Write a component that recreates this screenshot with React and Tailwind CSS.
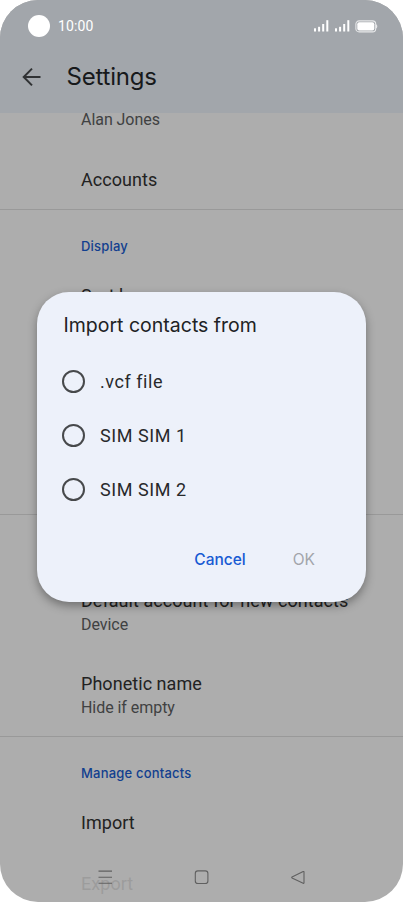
import React from "react";

const options = [".vcf file", "SIM SIM 1", "SIM SIM 2"];

const SignalIcon = () => (
  <svg width="15" height="12" viewBox="0 0 15 12" fill="white">
    <rect x="0" y="8.3" width="2" height="3.2" />
    <rect x="4.1" y="6.8" width="2" height="4.7" />
    <rect x="8.2" y="4" width="2" height="7.5" />
    <rect x="12.3" y="0.2" width="2" height="11.3" />
  </svg>
);

const BatteryIcon = () => (
  <svg width="23" height="13" viewBox="0 0 23 13" fill="none">
    <rect x="0.9" y="0.9" width="19.8" height="11" rx="3.2" stroke="white" strokeOpacity="0.75" strokeWidth="1.1" />
    <rect x="2.3" y="2.3" width="17" height="8.2" rx="2" fill="white" />
    <path d="M21.3 4.3C22.6 4.8 22.6 8 21.3 8.5Z" fill="white" />
  </svg>
);

const StatusBar = () => (
  <div className="flex h-[53px] items-center pr-[25px] pb-px pl-7 text-white">
    <div className="h-[22px] w-[22px] rounded-full bg-white" />
    <span className="ml-2 text-[14px] leading-5 tracking-[0.15px]">10:00</span>
    <div className="ml-auto flex items-center">
      <SignalIcon />
      <div className="ml-1.5">
        <SignalIcon />
      </div>
      <div className="ml-[5px]">
        <BatteryIcon />
      </div>
    </div>
  </div>
);

const Header = () => (
  <header className="h-[113px] bg-[#a2a6ab]">
    <StatusBar />
    <div className="flex h-12 items-center pl-[22px]">
      <svg width="20" height="20" viewBox="0 0 20 20" fill="none" stroke="#303234" strokeWidth="2">
        <path d="M18.5 10H2.3M10 1.6L1.7 10L10 18.4" />
      </svg>
      <h1 className="ml-[24.5px] font-['Inter',sans-serif] text-[24px] leading-8 font-normal tracking-[-0.2px] text-[#17191b]">
        Settings
      </h1>
    </div>
  </header>
);

const ItemTitle = ({ children }) => (
  <p className="text-[18px] leading-6 tracking-[0.05px] whitespace-nowrap text-[#222]">{children}</p>
);

const ItemDesc = ({ children }) => (
  <p className="text-[16px] leading-6 tracking-[-0.05px] whitespace-nowrap text-[#404142]">{children}</p>
);

const SectionTitle = ({ children }) => (
  <p className="font-['Inter',sans-serif] text-[13px] leading-6 font-medium tracking-[0.2px] text-[#123f8f]">
    {children}
  </p>
);

const SettingsList = () => (
  <main className="flex flex-col">
    <section className="h-[97px] border-b-[1.5px] border-[#999] pl-[81px]">
      <div className="-mt-[5px]">
        <ItemDesc>Alan Jones</ItemDesc>
      </div>
      <div className="mt-9">
        <ItemTitle>Accounts</ItemTitle>
      </div>
    </section>

    <section className="h-[305px] border-b-[1.5px] border-[#999] pt-6 pl-[81px]">
      <SectionTitle>Display</SectionTitle>
      <div className="mt-[26px]">
        <ItemTitle>Sort by</ItemTitle>
      </div>
    </section>

    <section className="h-[222px] border-b-[1.5px] border-[#999] pt-[74px] pl-[81px]">
      <ItemTitle>Default account for new contacts</ItemTitle>
      <ItemDesc>Device</ItemDesc>
      <div className="mt-[35px]">
        <ItemTitle>Phonetic name</ItemTitle>
        <ItemDesc>Hide if empty</ItemDesc>
      </div>
    </section>

    <section className="pt-6 pl-[81px]">
      <SectionTitle>Manage contacts</SectionTitle>
      <div className="mt-[26px]">
        <ItemTitle>Import</ItemTitle>
      </div>
      <div className="mt-[37px] opacity-12">
        <ItemTitle>Export</ItemTitle>
      </div>
    </section>
  </main>
);

const NavBar = () => (
  <nav className="absolute inset-x-0 bottom-0 flex h-[50px] items-center justify-between px-[97px] text-[#606060]">
    <svg width="16" height="16" viewBox="0 0 16 16" fill="none" stroke="currentColor" strokeWidth="1.1">
      <path d="M1.5 2.1H15M1.5 8.2H15M1.5 14.3H15" />
    </svg>
    <svg width="16" height="16" viewBox="0 0 16 16" fill="none" stroke="currentColor" strokeWidth="1.1">
      <rect x="1.3" y="1.9" width="12.6" height="12.6" rx="2.6" />
    </svg>
    <svg width="16" height="16" viewBox="0 0 16 16" fill="none" stroke="currentColor" strokeWidth="1.1" strokeLinejoin="round">
      <path d="M13.2 2.5L2 7.9Q1.4 8.4 2 8.9L13.2 14.3Q14 14.5 14 13.7V3.1Q14 2.3 13.2 2.5Z" />
    </svg>
  </nav>
);

const ImportDialog = () => (
  <div className="absolute top-[292px] left-[37px] h-[309.5px] w-[329px] rounded-[32px] bg-[#edf1fa] shadow-[0_4px_10px_rgba(0,0,0,0.35)]">
    <h2 className="pt-5 pl-[26.5px] font-['Inter',sans-serif] text-[19.5px] leading-[26px] font-normal text-[#202224]">
      Import contacts from
    </h2>
    <div className="mt-4">
      {options.map((option) => (
        <div key={option} className="flex h-[54px] items-center pl-[24.5px]">
          <span className="mt-px h-[23px] w-[23px] rounded-full border-2 border-[#47494b]" />
          <span className="mt-0.5 ml-[15.5px] text-[18px] leading-6 tracking-[0.55px] text-[#28292b]">{option}</span>
        </div>
      ))}
    </div>
    <div className="mt-8 flex justify-end pr-[51px] font-['Inter',sans-serif] text-[15.5px] leading-6">
      <button className="font-medium text-[#175ad3]">Cancel</button>
      <button className="ml-[47px] text-[#a2a5ab]">OK</button>
    </div>
  </div>
);

export default function App() {
  return (
    <div className="h-[902px] w-[403px] overflow-hidden bg-white">
      <div className="relative h-[902px] w-[403px] overflow-hidden rounded-[38px] bg-[#adadad] font-['Roboto',sans-serif]">
        <Header />
        <SettingsList />
        <NavBar />
        <ImportDialog />
      </div>
    </div>
  );
}
